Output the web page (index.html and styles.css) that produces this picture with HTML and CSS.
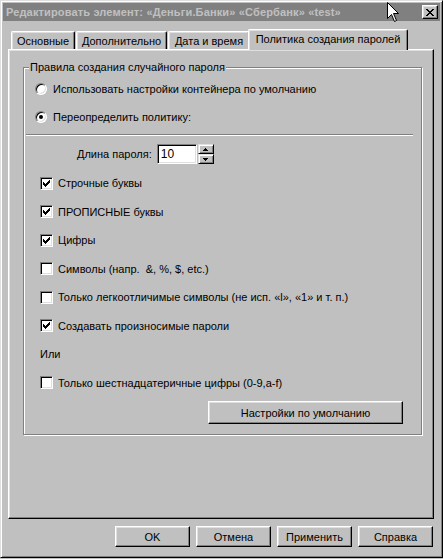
FILE: index.html
```html
<!DOCTYPE html>
<html lang="ru">
<head>
<meta charset="utf-8">
<title>Редактировать элемент</title>
<link rel="stylesheet" href="styles.css">
</head>
<body>
<div class="window">
  <div class="titlebar">
    <span class="title-text">Редактировать элемент: «Деньги.Банки» «Сбербанк» «test»</span>
    <span class="close-btn">
      <svg width="8" height="7" viewBox="0 0 8 7" shape-rendering="crispEdges">
        <path d="M0 0h2v1h-2zM6 0h2v1h-2zM1 1h2v1h-2zM5 1h2v1h-2zM2 2h4v1h-4zM3 3h2v1h-2zM2 4h4v1h-4zM1 5h2v1h-2zM5 5h2v1h-2zM0 6h2v1h-2zM6 6h2v1h-2z" fill="#000"/>
      </svg>
    </span>
  </div>
  <div class="body">
    <div class="tabs">
      <div class="tab tab-1">Основные</div>
      <div class="tab tab-2">Дополнительно</div>
      <div class="tab tab-3">Дата и время</div>
      <div class="tab tab-active">Политика создания паролей</div>
    </div>
    <div class="panel">
      <div class="group">
        <div class="group-label">Правила создания случайного пароля</div>
        <div class="row radio-row first">
          <span class="radio"></span>
          <span class="label">Использовать настройки контейнера по умолчанию</span>
        </div>
        <div class="row radio-row second">
          <span class="radio checked"><span class="dot"></span></span>
          <span class="label">Переопределить политику:</span>
        </div>
        <div class="separator"></div>
        <div class="row length-row">
          <span class="label">Длина пароля:</span>
          <span class="spin-input">10</span>
          <span class="spin">
            <span class="spin-btn"><svg width="5" height="3" viewBox="0 0 5 3" shape-rendering="crispEdges"><path d="M2 0h1v1h-1zM1 1h3v1h-3zM0 2h5v1h-5z" fill="#000"/></svg></span>
            <span class="spin-btn"><svg width="5" height="3" viewBox="0 0 5 3" shape-rendering="crispEdges"><path d="M0 0h5v1h-5zM1 1h3v1h-3zM2 2h1v1h-1z" fill="#000"/></svg></span>
          </span>
        </div>
        <div class="options">
          <div class="row cb-row"><span class="checkbox checked"><svg class="check" width="7" height="7" viewBox="0 0 7 7" shape-rendering="crispEdges"><path d="M6 0h1v3h-1zM5 1h1v3h-1zM4 2h1v3h-1zM3 3h1v3h-1zM2 4h1v3h-1zM1 3h1v3h-1zM0 2h1v3h-1z" fill="#000"/></svg></span><span class="label">Строчные буквы</span></div>
          <div class="row cb-row"><span class="checkbox checked"><svg class="check" width="7" height="7" viewBox="0 0 7 7" shape-rendering="crispEdges"><path d="M6 0h1v3h-1zM5 1h1v3h-1zM4 2h1v3h-1zM3 3h1v3h-1zM2 4h1v3h-1zM1 3h1v3h-1zM0 2h1v3h-1z" fill="#000"/></svg></span><span class="label">ПРОПИСНЫЕ буквы</span></div>
          <div class="row cb-row"><span class="checkbox checked"><svg class="check" width="7" height="7" viewBox="0 0 7 7" shape-rendering="crispEdges"><path d="M6 0h1v3h-1zM5 1h1v3h-1zM4 2h1v3h-1zM3 3h1v3h-1zM2 4h1v3h-1zM1 3h1v3h-1zM0 2h1v3h-1z" fill="#000"/></svg></span><span class="label">Цифры</span></div>
          <div class="row cb-row"><span class="checkbox"></span><span class="label">Символы (напр. &nbsp;&amp;, %, $, etc.)</span></div>
          <div class="row cb-row"><span class="checkbox"></span><span class="label">Только легкоотличимые символы (не исп. «l», «1» и т. п.)</span></div>
          <div class="row cb-row"><span class="checkbox checked"><svg class="check" width="7" height="7" viewBox="0 0 7 7" shape-rendering="crispEdges"><path d="M6 0h1v3h-1zM5 1h1v3h-1zM4 2h1v3h-1zM3 3h1v3h-1zM2 4h1v3h-1zM1 3h1v3h-1zM0 2h1v3h-1z" fill="#000"/></svg></span><span class="label">Создавать произносимые пароли</span></div>
          <div class="row or-row"><span class="label">Или</span></div>
          <div class="row cb-row"><span class="checkbox"></span><span class="label">Только шестнадцатеричные цифры (0-9,a-f)</span></div>
        </div>
        <div class="btn defaults-btn">Настройки по умолчанию</div>
      </div>
    </div>
    <div class="buttons">
      <div class="btn">OK</div>
      <div class="btn">Отмена</div>
      <div class="btn">Применить</div>
      <div class="btn">Справка</div>
    </div>
  </div>
  <svg class="cursor" width="13" height="21" viewBox="0 0 13 21">
    <path d="M0.5 0.5 L0.5 16.5 L4.5 12.5 L7.5 19.5 L9.5 18.5 L6.5 11.5 L11.5 11.5 Z" fill="#fff" stroke="#000" stroke-width="1"/>
  </svg>
</div>
</body>
</html>
```
FILE: styles.css
```css
html, body {
  margin: 0;
  padding: 0;
  background: #c0c0c0;
}
body {
  font-family: "Liberation Sans", Arial, sans-serif;
  font-size: 11px;
  color: #000;
}
.window {
  position: relative;
  width: 443px;
  height: 558px;
  box-sizing: border-box;
  background: #c0c0c0;
  border: 1px solid;
  border-color: #dfdfdf #000 #000 #dfdfdf;
  box-shadow: inset 1px 1px 0 #fff, inset -1px -1px 0 #808080;
  padding: 2px;
  display: flex;
  flex-direction: column;
}
.titlebar {
  height: 18px;
  background: #808080;
  display: flex;
  align-items: center;
  justify-content: space-between;
  padding: 0 2px 0 3px;
}
.title-text {
  color: #c0c0c0;
  font-weight: bold;
  font-size: 11px;
  letter-spacing: 0.15px;
  white-space: nowrap;
}
.close-btn {
  width: 16px;
  height: 14px;
  box-sizing: border-box;
  background: #c0c0c0;
  border: 1px solid;
  border-color: #fff #000 #000 #fff;
  box-shadow: inset -1px -1px 0 #808080, inset 1px 1px 0 #dfdfdf;
  display: flex;
  align-items: center;
  justify-content: center;
}
.body {
  flex: 1;
  display: flex;
  flex-direction: column;
  padding: 0 6px 0 5px;
}
.tabs {
  display: flex;
  align-items: flex-end;
  height: 20px;
  margin-top: 8px;
  padding-left: 3px;
  position: relative;
  z-index: 2;
}
.tab {
  height: 18px;
  box-sizing: border-box;
  border-top: 1px solid #fff;
  border-left: 1px solid #fff;
  border-right: 1px solid #000;
  border-radius: 2px 2px 0 0;
  box-shadow: inset -1px 0 0 #808080, inset 1px 1px 0 #dfdfdf;
  display: flex;
  align-items: center;
  justify-content: center;
  white-space: nowrap;
  padding-top: 1px;
}
.tab-1 { width: 64px; margin-right: 1px; }
.tab-2 { width: 91px; margin-right: 1px; }
.tab-3 { width: 82px; }
.tab-active {
  width: 160px;
  height: 21px;
  margin-left: -2px;
  margin-bottom: -1px;
  background: #c0c0c0;
  padding-top: 0;
  padding-bottom: 3px;
}
.panel {
  height: 470px;
  box-sizing: border-box;
  border: 1px solid;
  border-color: #fff #000 #000 #fff;
  box-shadow: inset -1px -1px 0 #808080, inset 1px 1px 0 #dfdfdf;
  padding: 17px 11px 0 14px;
  position: relative;
  z-index: 1;
}
.group {
  position: relative;
  border: 1px solid #808080;
  box-shadow: inset 1px 1px 0 #fff, 1px 1px 0 #fff;
  height: 368px;
  box-sizing: border-box;
  display: flex;
  flex-direction: column;
}
.group-label {
  position: absolute;
  top: -7px;
  left: 5px;
  padding: 0 1px;
  background: #c0c0c0;
  line-height: 13px;
}
.row {
  display: flex;
  align-items: center;
  height: 20px;
  white-space: nowrap;
}
.radio-row { padding-left: 11px; }
.radio-row.first { margin-top: 11px; }
.radio-row.second { margin-top: 8px; }
.radio {
  width: 12px;
  height: 12px;
  box-sizing: border-box;
  border-radius: 50%;
  border: 1px solid;
  border-color: #808080 #fff #fff #808080;
  box-shadow: inset 1px 1px 0 #000, inset -1px -1px 0 #dfdfdf;
  background: #fff;
  display: flex;
  align-items: center;
  justify-content: center;
  margin-right: 6px;
}
.dot {
  width: 4px;
  height: 4px;
  border-radius: 50%;
  background: #000;
}
.separator {
  margin: 7px 8px 0 2px;
  border-top: 1px solid #808080;
  border-bottom: 1px solid #fff;
  height: 0;
}
.length-row {
  margin-top: 8px;
  padding-left: 53px;
}
.spin-input {
  margin-left: 5px;
  width: 40px;
  height: 20px;
  box-sizing: border-box;
  background: #fff;
  border: 1px solid;
  border-color: #808080 #fff #fff #808080;
  box-shadow: inset 1px 1px 0 #000, inset -1px -1px 0 #dfdfdf;
  padding: 2px 0 0 3px;
  font-size: 12px;
  line-height: 14px;
}
.spin {
  display: flex;
  flex-direction: column;
  margin-left: 1px;
}
.spin-btn {
  width: 16px;
  height: 10px;
  box-sizing: border-box;
  border: 1px solid;
  border-color: #dfdfdf #000 #000 #dfdfdf;
  box-shadow: inset 1px 1px 0 #fff, inset -1px -1px 0 #808080;
  display: flex;
  align-items: center;
  justify-content: center;
}
.options {
  margin-top: 9px;
  display: flex;
  flex-direction: column;
  gap: 8.5px;
}
.cb-row { padding-left: 16px; }
.or-row { padding-left: 16px; }
.checkbox {
  width: 13px;
  height: 13px;
  box-sizing: border-box;
  background: #fff;
  border: 1px solid;
  border-color: #808080 #fff #fff #808080;
  box-shadow: inset 1px 1px 0 #000, inset -1px -1px 0 #dfdfdf;
  margin-right: 5px;
  display: flex;
  align-items: center;
  justify-content: center;
  flex-shrink: 0;
}
.check { display: block; }
.btn {
  width: 75px;
  height: 21px;
  box-sizing: border-box;
  border: 1px solid;
  border-color: #fff #000 #000 #fff;
  box-shadow: inset -1px -1px 0 #808080, inset 1px 1px 0 #dfdfdf;
  display: flex;
  align-items: center;
  justify-content: center;
  white-space: nowrap;
}
.defaults-btn {
  width: 195px;
  height: 23px;
  align-self: flex-end;
  margin: 8.5px 18px 0 0;
}
.buttons {
  display: flex;
  justify-content: flex-end;
  gap: 6px;
  margin-top: 7px;
  padding-right: 1px;
}
.cursor {
  position: absolute;
  left: 386px;
  top: 1px;
}
```
